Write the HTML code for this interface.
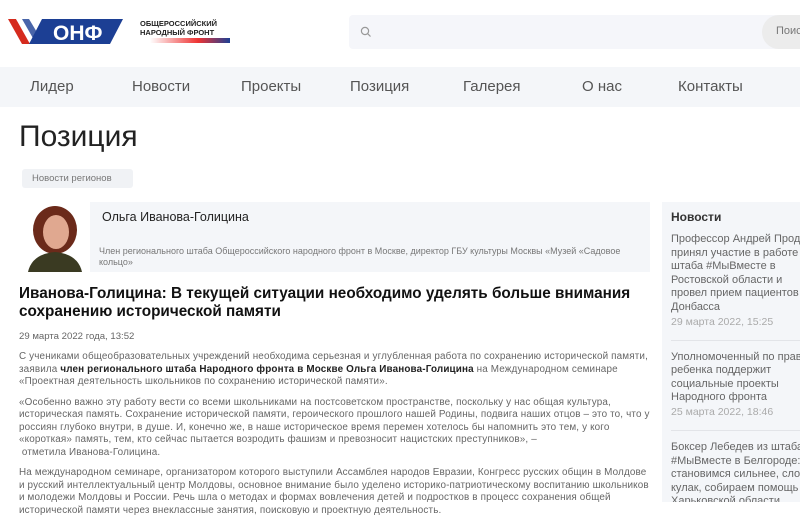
<!DOCTYPE html>
<html><head><meta charset="utf-8"><style>
*{margin:0;padding:0;box-sizing:border-box}
body{width:800px;height:500px;overflow:hidden;background:#fff;font-family:"Liberation Sans","DejaVu Sans",sans-serif;color:#222;position:relative}
.a{position:absolute}
.nav span{position:absolute;top:78px;font-size:15px;color:#555}
p.t{font-size:9.9px;letter-spacing:.15px;line-height:12.5px;color:#666;margin-bottom:8px}
.sb{font-size:11px;line-height:13.6px;color:#666}
.sd{font-size:10.5px;color:#aaa;margin-top:1px}
.hr{border-top:1px solid #e2e4e8;margin:12px 0 10px}
</style></head><body>
<svg class="a" style="left:6px;top:18px" width="126" height="28" viewBox="0 0 126 28">
<polygon points="2,1 10,1 24,26 16,26" fill="#d52b1e"/>
<polygon points="10,1 16,1 29,22 25,24" fill="#fff"/>
<polygon points="16,1 23,1 32,16 28,22" fill="#1c3f94" opacity=".8"/>
<polygon points="36,1 117,1 104,26 23,26" fill="#1c3f94"/>
<text x="47" y="22" font-family="Liberation Sans" font-weight="bold" font-size="21" fill="#fff">ОНФ</text>
</svg>
<div class="a" style="left:140px;top:19px;font-size:7.5px;font-weight:bold;line-height:9px;color:#222">ОБЩЕРОССИЙСКИЙ<br>НАРОДНЫЙ ФРОНТ</div>
<div class="a" style="left:150px;top:38px;width:80px;height:5px;background:linear-gradient(90deg,#fff,#e33 60%,#1c3f94)"></div>
<div class="a" style="left:349px;top:15px;width:460px;height:34px;background:#f5f6fa;border-radius:4px"></div>
<svg class="a" style="left:360px;top:26px" width="12" height="12" viewBox="0 0 12 12"><circle cx="5" cy="5" r="3.6" fill="none" stroke="#999" stroke-width="1.2"/><line x1="7.7" y1="7.7" x2="10.5" y2="10.5" stroke="#999" stroke-width="1.2"/></svg>
<div class="a" style="left:762px;top:15px;width:60px;height:34px;background:#ececec;border-radius:17px;font-size:11px;color:#777;padding:10px 0 0 14px">Поиск</div>
<div class="a nav" style="left:0;top:67px;width:800px;height:40px;background:#f4f6f9">
<span style="left:30px;top:11px">Лидер</span><span style="left:132px;top:11px">Новости</span><span style="left:241px;top:11px">Проекты</span><span style="left:350px;top:11px">Позиция</span><span style="left:463px;top:11px">Галерея</span><span style="left:582px;top:11px">О нас</span><span style="left:678px;top:11px">Контакты</span></div>
<div class="a" style="left:19px;top:120px;font-size:30px;color:#222">Позиция</div>
<div class="a" style="left:22px;top:169px;width:111px;height:19px;background:#f0f2f5;border-radius:3px;font-size:9.5px;color:#777;padding:4px 0 0 10px">Новости регионов</div>
<svg class="a" style="left:20px;top:202px" width="70" height="70" viewBox="0 0 70 70"><rect width="70" height="70" fill="#fff"/><ellipse cx="35" cy="28" rx="22" ry="24" fill="#6b2a1a"/><ellipse cx="36" cy="30" rx="13" ry="17" fill="#e0a890"/><path d="M8 70 Q12 52 35 50 Q58 52 62 70Z" fill="#3a3a22"/></svg>
<div class="a" style="left:90px;top:202px;width:560px;height:70px;background:#f4f6f9"></div>
<div class="a" style="left:102px;top:210px;font-size:12.5px;color:#222">Ольга Иванова-Голицина</div>
<div class="a" style="left:99px;top:246px;width:545px;font-size:9px;line-height:11px;color:#777">Член регионального штаба Общероссийского народного фронт в Москве, директор ГБУ культуры Москвы «Музей «Садовое кольцо»</div>
<div class="a" style="left:19px;top:285px;width:630px;font-size:15.3px;line-height:18px;font-weight:bold;color:#111">Иванова-Голицина: В текущей ситуации необходимо уделять больше внимания сохранению исторической памяти</div>
<div class="a" style="left:19px;top:331px;font-size:9.6px;color:#666">29 марта 2022 года, 13:52</div>
<div class="a" style="left:19px;top:351px;width:632px">
<p class="t">С учениками общеобразовательных учреждений необходима серьезная и углубленная работа по сохранению исторической памяти, заявила <b style="color:#222">член регионального штаба Народного фронта в Москве Ольга Иванова-Голицина</b> на Международном семинаре «Проектная деятельность школьников по сохранению исторической памяти».</p>
<p class="t">«Особенно важно эту работу вести со всеми школьниками на постсоветском пространстве, поскольку у нас общая культура, историческая память. Сохранение исторической памяти, героического прошлого нашей Родины, подвига наших отцов – это то, что у россиян глубоко внутри, в душе. И, конечно же, в наше историческое время перемен хотелось бы напомнить это тем, у кого «короткая» память, тем, кто сейчас пытается возродить фашизм и превозносит нацистских преступников», –<br>&nbsp;отметила Иванова-Голицина.</p>
<p class="t">На международном семинаре, организатором которого выступили Ассамблея народов Евразии, Конгресс русских общин в Молдове и русский интеллектуальный центр Молдовы, основное внимание было уделено историко-патриотическому воспитанию школьников и молодежи Молдовы и России. Речь шла о методах и формах вовлечения детей и подростков в процесс сохранения общей исторической памяти через внеклассные занятия, поисковую и проектную деятельность.</p>
</div>
<div class="a" style="left:662px;top:202px;width:150px;height:300px;background:#f4f6f9;padding:8px 0 0 9px;white-space:nowrap;overflow:hidden">
<div style="font-size:12px;font-weight:bold;color:#333;margin-bottom:9px">Новости</div>
<div class="sb">Профессор Андрей Продеус<br>принял участие в работе<br>штаба #МыВместе в<br>Ростовской области и<br>провел прием пациентов<br>Донбасса</div><div class="sd">29 марта 2022, 15:25</div>
<div class="hr"></div>
<div class="sb">Уполномоченный по правам<br>ребенка поддержит<br>социальные проекты<br>Народного фронта</div><div class="sd">25 марта 2022, 18:46</div>
<div class="hr"></div>
<div class="sb">Боксер Лебедев из штаба<br>#МыВместе в Белгороде:<br>становимся сильнее, слов<br>кулак, собираем помощь<br>Харьковской области</div>
</div>
</body></html>
